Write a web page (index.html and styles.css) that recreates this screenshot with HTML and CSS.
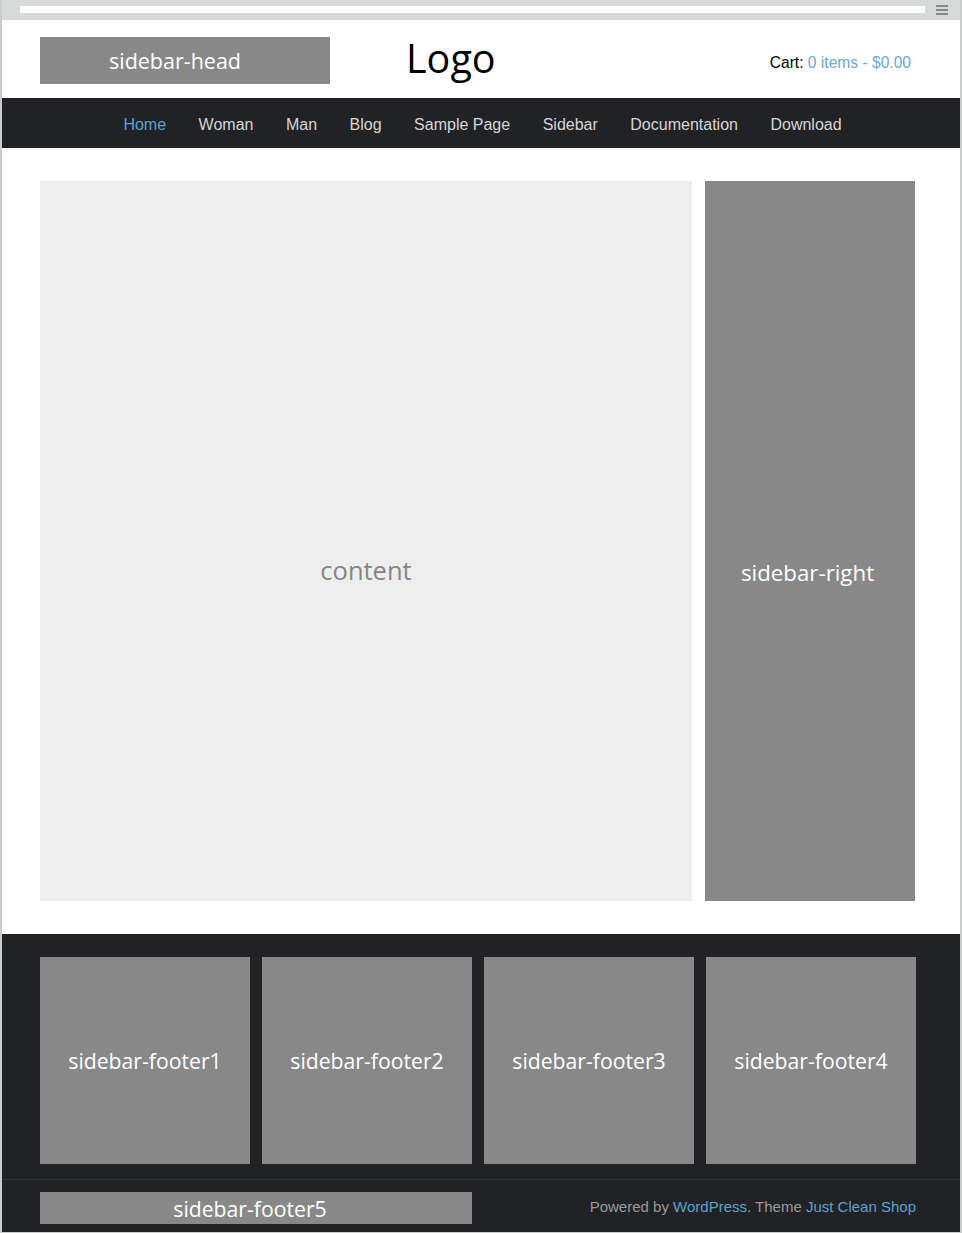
FILE: index.html
```html
<!doctype html>
<html>
<head>
<meta charset="utf-8">
<title>Just Clean Shop</title>
<link rel="stylesheet" href="styles.css">
</head>
<body>
<div class="window">
	<div class="topbar">
		<span class="address"></span>
		<span class="burger"><i></i><i></i><i></i></span>
	</div>
	<div class="header">
		<div class="sidebar-head block">sidebar-head</div>
		<div class="logo">Logo</div>
		<div class="cart">Cart: <a href="#">0 items - $0.00</a></div>
	</div>
	<div class="nav">
		<a class="active" href="#">Home</a>
		<a href="#">Woman</a>
		<a href="#">Man</a>
		<a href="#">Blog</a>
		<a href="#">Sample Page</a>
		<a href="#">Sidebar</a>
		<a href="#">Documentation</a>
		<a href="#">Download</a>
	</div>
	<div class="main">
		<div class="content">content</div>
		<div class="sidebar-right block">sidebar-right</div>
	</div>
	<div class="footer">
		<div class="footer-widgets">
			<div class="block">sidebar-footer1</div>
			<div class="block">sidebar-footer2</div>
			<div class="block">sidebar-footer3</div>
			<div class="block">sidebar-footer4</div>
		</div>
		<div class="footer-bottom">
			<div class="sidebar-footer5 block">sidebar-footer5</div>
			<div class="credits">Powered by <a href="#">WordPress</a>. Theme <a href="#">Just Clean Shop</a></div>
		</div>
	</div>
</div>
</body>
</html>
```
FILE: styles.css
```css
body{
	margin:0;
	background:#fff;
	font-family:"Liberation Sans", Arial, sans-serif;
	}
a{
	text-decoration:none;
	}
.window{
	width:958px;
	border:2px solid #c9cccb;
	border-top:0;
	}
.topbar{
	height:20px;
	background:#d6dad9;
	display:flex;
	align-items:center;
	padding-left:18px;
	}
.address{
	width:905px;
	height:7px;
	background:#fff;
	margin-top:-2px;
	}
.burger{
	display:flex;
	flex-direction:column;
	gap:2px;
	margin-left:11px;
	margin-top:-1px;
	}
.burger i{
	display:block;
	width:12px;
	height:2px;
	background:#8a8583;
	}
.block{
	background:#888;
	color:#fff;
	font-family:"Open Sans", "Liberation Sans", sans-serif;
	display:flex;
	align-items:center;
	justify-content:center;
	}
.header{
	height:78px;
	display:flex;
	align-items:center;
	padding:0 49px 0 38px;
	}
.sidebar-head{
	width:290px;
	height:47px;
	font-size:21.5px;
	margin-top:3px;
	padding-right:20px;
	box-sizing:border-box;
	}
.logo{
	margin-left:76px;
	font-family:"Open Sans", "Liberation Sans", sans-serif;
	font-size:39.5px;
	color:#000;
	margin-top:-3px;
	}
.cart{
	margin-left:auto;
	font-size:15.6px;
	color:#000;
	margin-top:8px;
	}
.cart a{
	color:#6aa7d4;
	}
.nav{
	height:50px;
	background:#212226;
	display:flex;
	align-items:center;
	justify-content:center;
	gap:32.5px;
	padding:4px 0 0 3px;
	box-sizing:border-box;
	}
.nav a{
	color:#d6d6d6;
	font-size:16px;
	}
.nav a.active{
	color:#5ba4cf;
	}
.main{
	display:flex;
	gap:13px;
	padding:33px 0 33px 38px;
	}
.content{
	width:652px;
	height:720px;
	padding-top:58px;
	box-sizing:border-box;
	background:#eee;
	color:#858585;
	font-family:"Open Sans", "Liberation Sans", sans-serif;
	font-size:25.5px;
	display:flex;
	align-items:center;
	justify-content:center;
	}
.sidebar-right{
	width:210px;
	height:720px;
	padding:62px 5px 0 0;
	box-sizing:border-box;
	font-size:22.3px;
	}
.footer{
	background:#212226;
	padding-top:23px;
	}
.footer-widgets{
	display:grid;
	grid-template-columns:repeat(4, 210px);
	gap:12px;
	padding-left:38px;
	padding-bottom:15px;
	border-bottom:1px solid #2f3034;
	}
.footer-widgets .block{
	height:207px;
	font-size:21.2px;
	}
.footer-bottom{
	display:flex;
	align-items:center;
	padding:12px 44px 8px 38px;
	}
.sidebar-footer5{
	width:432px;
	height:32px;
	font-size:21.2px;
	padding-right:12px;
	box-sizing:border-box;
	}
.credits{
	margin-left:auto;
	font-size:15px;
	color:#9a9a9a;
	margin-top:-3px;
	}
.credits a{
	color:#5ba4cf;
	}
```
